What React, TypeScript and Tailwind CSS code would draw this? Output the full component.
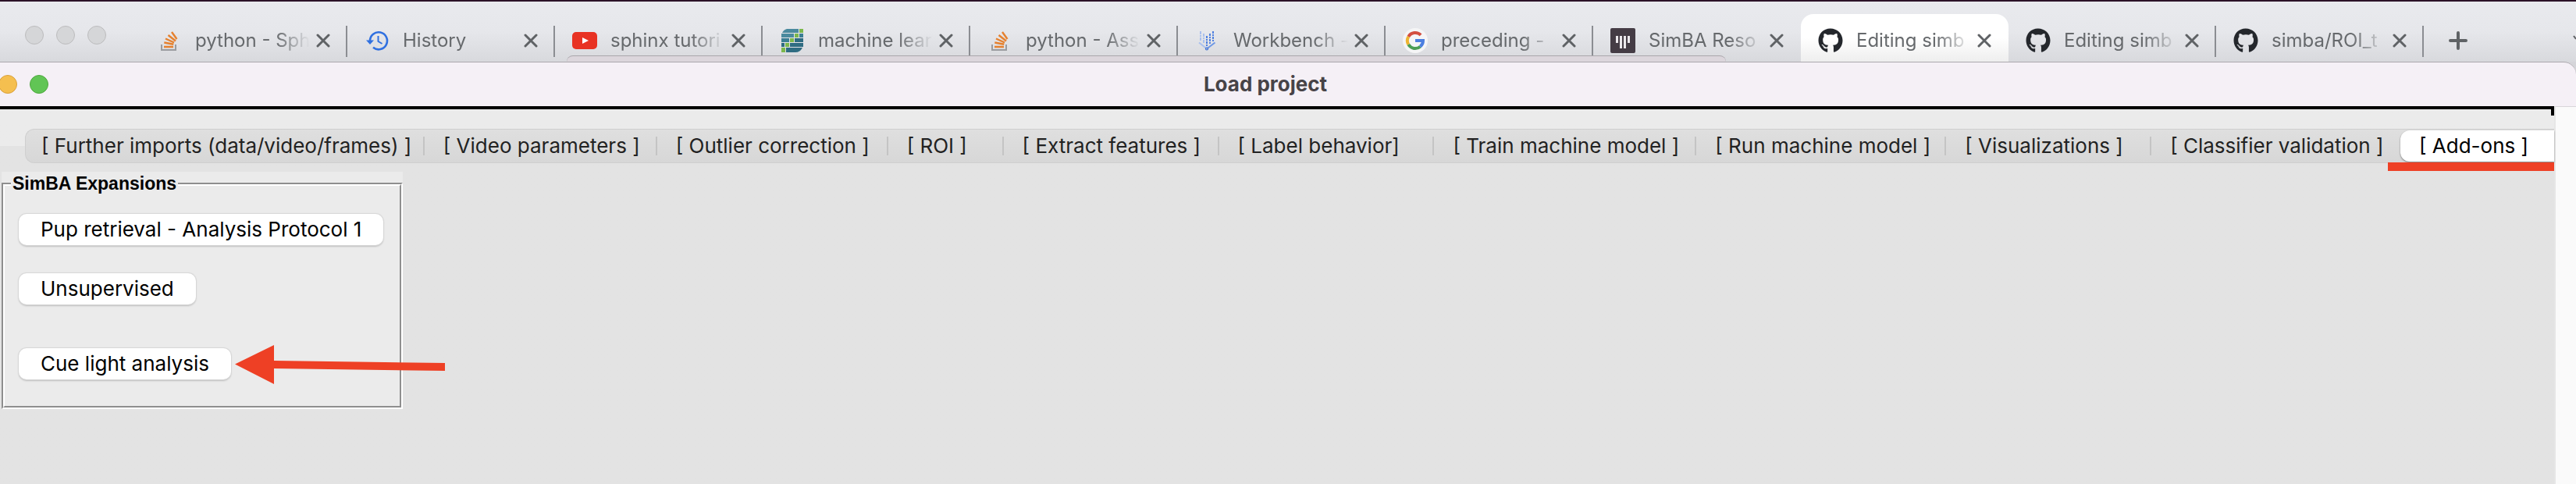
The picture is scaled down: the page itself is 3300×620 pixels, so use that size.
import React from "react";
import { FaGithub } from "react-icons/fa";

type IconName = "stack" | "history" | "youtube" | "springer" | "workbench" | "google" | "gitter" | "github";

function StackIcon() {
  return (
    <svg viewBox="0 0 32 32" className="size-8" fill="none" aria-hidden="true">
      <path d="M6 21v7h18v-7" stroke="#9a9c9f" strokeWidth="2" />
      <path d="M9 24h12M9.300 18.500l12 2.300M11 13.500l11 5M14.500 9l9.500 7.500M19 5l6.500 9" stroke="#e5812f" strokeWidth="2.400" />
    </svg>
  );
}

function HistoryIcon() {
  return (
    <svg viewBox="0 0 32 32" className="size-8" fill="none" aria-hidden="true">
      <path d="M7 16.500a11 11 0 1 1 4 8.300" stroke="#3070e0" strokeWidth="2.600" />
      <path d="M2 15.500h10l-5 5.500z" fill="#3070e0" />
      <path d="M17.500 10v7l5 3" stroke="#3070e0" strokeWidth="2" />
    </svg>
  );
}

function YoutubeIcon() {
  return (
    <svg viewBox="0 0 32 32" className="size-8" aria-hidden="true">
      <rect y="5" width="32" height="22" rx="5" fill="#e83223" />
      <path d="M13 12l8 4-8 4z" fill="#fff" />
    </svg>
  );
}

function SpringerIcon() {
  return (
    <svg viewBox="0 0 32 32" className="size-8" aria-hidden="true">
      <path d="M9 1h15v5H3Q5 2 9 1z" fill="#4b8a9e" />
      <path d="M2 7h16v5H2z" fill="#4b8a9e" />
      <path d="M25 7h5v5h-5zM2 13h10v5H2z" fill="#3b7e94" />
      <path d="M19 13h11v5H19zM2 19h4v5H2zM13 19h17v5H13z" fill="#2f6c82" />
      <path d="M8 25h21q-3 6-9 6H8z" fill="#2f6c82" />
      <path d="M25 1h5v5h-5zM19 7h5v5h-5zM13 13h5v5h-5zM7 19h5v5H7zM2 25h5v6H2z" fill="#7cb84c" />
    </svg>
  );
}

function WorkbenchIcon() {
  return (
    <svg viewBox="0 0 32 32" className="size-8" fill="none" aria-hidden="true">
      <path d="M7 4v13M11 7v13" stroke="#a9c0ee" strokeWidth="2" strokeDasharray="4 1 2 1" />
      <path d="M15 10v13M19 7v13M23 4v13" stroke="#4f80e0" strokeWidth="2" strokeDasharray="3 1 2 1" />
      <path d="M5 18.500l10 8" stroke="#a9c0ee" strokeWidth="2" />
      <path d="M25.500 18.500l-10.500 8" stroke="#6f98e6" strokeWidth="2" />
      <circle cx="15" cy="26.500" r="1.500" fill="#a9c0ee" stroke="#3f6fd0" strokeWidth="1.200" />
    </svg>
  );
}

function GoogleIcon() {
  return (
    <svg viewBox="0 0 32 32" className="size-8" fill="none" aria-hidden="true">
      <circle cx="16" cy="16" r="16" fill="#f5f5f6" />
      <path d="M7.300 10.900A10 10 0 0 1 23.100 8.900" stroke="#d34f40" strokeWidth="4" />
      <path d="M7.300 21.100a10 10 0 0 1 0-10.200" stroke="#eeb431" strokeWidth="4" />
      <path d="M22.400 23.700A10 10 0 0 1 7.300 21.100" stroke="#4c9e54" strokeWidth="4" />
      <path d="M16 16h10a10 10 0 0 1-3.600 7.700" stroke="#4c7fe0" strokeWidth="4" />
    </svg>
  );
}

function GitterIcon() {
  return (
    <svg viewBox="0 0 32 32" className="size-8" aria-hidden="true">
      <rect width="32" height="32" rx="2" fill="#453c45" />
      <path d="M7 10h3v9H7zM12 10h3v16h-3zM17 10h3v16h-3zM22 10h3v9h-3z" fill="#ece8ec" />
    </svg>
  );
}

function TabIcon({ name }: { name: IconName }) {
  switch (name) {
    case "stack":
      return <StackIcon />;
    case "history":
      return <HistoryIcon />;
    case "youtube":
      return <YoutubeIcon />;
    case "springer":
      return <SpringerIcon />;
    case "workbench":
      return <WorkbenchIcon />;
    case "google":
      return <GoogleIcon />;
    case "gitter":
      return <GitterIcon />;
    default:
      return <FaGithub className="size-8 text-[#24272c]" aria-hidden="true" />;
  }
}

const browserTabs: { icon: IconName; title: string; active?: boolean; divider?: boolean }[] = [
  { icon: "stack", title: "python - Sph", divider: true },
  { icon: "history", title: "History", divider: true },
  { icon: "youtube", title: "sphinx tutori", divider: true },
  { icon: "springer", title: "machine lear", divider: true },
  { icon: "stack", title: "python - Ass", divider: true },
  { icon: "workbench", title: "Workbench -", divider: true },
  { icon: "google", title: "preceding -", divider: true },
  { icon: "gitter", title: "SimBA Reso" },
  { icon: "github", title: "Editing simb", active: true },
  { icon: "github", title: "Editing simb", divider: true },
  { icon: "github", title: "simba/ROI_t", divider: true },
];

function BrowserTab({ icon, title, active, divider }: (typeof browserTabs)[number]) {
  return (
    <div
      className={
        active
          ? "flex h-full min-w-0 flex-1 items-end rounded-t-2xl bg-linear-to-b from-white via-white to-[#eeeeee] pb-[6px]"
          : "flex h-full min-w-0 flex-1 items-end pb-[6px]"
      }
    >
      <div className="flex h-10 min-w-0 flex-1 items-center pb-[2px] pl-[22px]">
        <span className="shrink-0">
          <TabIcon name={icon} />
        </span>
        <span className="ml-[17px] min-w-0 flex-1 overflow-hidden mask-r-from-70% text-[24px] leading-8 whitespace-nowrap text-[#66696c]">
          {title}
        </span>
        <button type="button" aria-label={`Close ${title}`} className="mr-5 ml-2 shrink-0">
          <svg viewBox="0 0 18 18" className="size-[18px]" aria-hidden="true">
            <path d="M2 2l14 14M16 2L2 16" stroke="#5f6265" strokeWidth="3" strokeLinecap="round" />
          </svg>
        </button>
      </div>
      <span className={divider ? "h-10 w-[2px] shrink-0 bg-[#8b8d92]" : "h-10 w-[2px] shrink-0"} />
    </div>
  );
}

function BrowserBar() {
  return (
    <header className="relative border-t-2 border-[#2b1228] bg-linear-to-b from-[#e9eaee] via-[#e6e7eb] to-[#d8d9dd]">
      <div className="flex h-[77px] pt-4">
        <div className="flex w-[179px] shrink-0 gap-4 pt-[15px] pl-8">
          <span className="size-6 shrink-0 rounded-full border border-[#bcbcbd] bg-[#d5d6d8]" />
          <span className="size-6 shrink-0 rounded-full border border-[#bcbcbd] bg-[#d5d6d8]" />
          <span className="size-6 shrink-0 rounded-full border border-[#bcbcbd] bg-[#d5d6d8]" />
        </div>
        <div className="flex min-w-0 flex-1">
          {browserTabs.map((tab, i) => (
            <BrowserTab key={i} {...tab} />
          ))}
        </div>
        <div className="flex w-[195px] shrink-0 items-center justify-between overflow-hidden pl-8">
          <button type="button" aria-label="New tab" className="pt-[6px]">
            <svg viewBox="0 0 24 24" className="size-6" aria-hidden="true">
              <path d="M12 2v20M2 12h20" stroke="#5f6265" strokeWidth="4" strokeLinecap="round" />
            </svg>
          </button>
          <svg viewBox="0 0 4 8" className="h-2 w-1" aria-hidden="true">
            <path d="M1 1l3 4" stroke="#5f6265" strokeWidth="2" />
          </svg>
        </div>
      </div>
      <div className="absolute right-[33%] bottom-0 left-[22%] h-2 rounded-t-2xl border-t border-[#a9a6aa] bg-[#dcd6dc]" />
    </header>
  );
}

function TitleBar() {
  return (
    <div className="bg-[#d5d5d9]">
      <div className="flex h-[57px] items-center overflow-hidden rounded-tr-2xl border-t border-[#aba8ad] bg-[#f5f0f6]">
        <div className="-ml-[2px] flex w-[60px] shrink-0 gap-4">
          <span className="size-6 shrink-0 rounded-full border border-[#d9a03c] bg-[#f5bf4f]" />
          <span className="size-6 shrink-0 rounded-full border border-[#4fa83f] bg-[#61c555]" />
        </div>
        <h1 className="mr-[116px] flex-1 text-center text-[26px] leading-8 font-bold text-[#474347]">Load project</h1>
      </div>
    </div>
  );
}

const projectTabs = [
  "[ Further imports (data/video/frames) ]",
  "[ Video parameters ]",
  "[ Outlier correction ]",
  "[ ROI ]",
  "[ Extract features ]",
  "[ Label behavior]",
  "[ Train machine model ]",
  "[ Run machine model ]",
  "[ Visualizations ]",
  "[ Classifier validation ]",
  "[ Add-ons ]",
];

function ProjectTabs() {
  const last = projectTabs.length - 1;
  return (
    <nav
      role="tablist"
      className="ml-8 grid h-11 grid-cols-[511fr_298fr_296fr_148fr_276fr_276fr_336fr_320fr_263fr_319fr_197fr] rounded-l-xl border-y border-l border-[#cfcfcf] bg-linear-to-b from-[#dfdfdf] to-[#d7d7d7]"
    >
      {projectTabs.map((label, i) => (
        <div key={label} className="group relative flex min-w-0 items-center">
          <button
            type="button"
            role="tab"
            aria-selected={i === last}
            className={
              i === last
                ? "h-10 w-full rounded-l-xl bg-white pl-6 text-left text-[26px] leading-8 whitespace-nowrap text-black shadow-[0_1px_2px_#777]"
                : "h-full min-w-0 flex-1 pl-6 text-left text-[26px] leading-8 whitespace-nowrap text-[#222222] group-first:pl-5"
            }
          >
            {label}
          </button>
          {i < last - 1 && <span className="h-6 w-[2px] shrink-0 bg-[#c4c4c4]" />}
          {i === last && <span className="absolute top-full right-0 -left-4 h-[11px] bg-[#ee4025]" />}
        </div>
      ))}
    </nav>
  );
}

function PushButton({ children }: { children: React.ReactNode }) {
  return (
    <button
      type="button"
      className="h-10 rounded-[10px] bg-white px-7 text-[26px] leading-8 whitespace-nowrap text-black shadow-[0_0_1px_1px_#d6d6d6,0_2px_2px_#bdbdbd]"
    >
      {children}
    </button>
  );
}

function ExpansionsPanel() {
  return (
    <div className="relative mt-[11px] ml-[2px] w-[514px] bg-[#ebebeb]">
      <fieldset className="border-2 border-t-[#8e8e8e] border-r-white border-b-white border-l-[#8e8e8e] pl-[10px]">
        <legend className="relative z-10 bg-[#ebebeb] px-[2px] font-['Liberation_Sans',Arial,sans-serif] text-[23px] leading-[30px] font-bold text-black">
          SimBA Expansions
        </legend>
        <div className="-mt-[14px] -ml-[10px] flex flex-col items-start border-2 border-t-white border-r-[#8e8e8e] border-b-[#8e8e8e] border-l-white pt-9 pb-[34px] pl-[18px]">
          <PushButton>Pup retrieval - Analysis Protocol 1</PushButton>
          <div className="mt-9">
            <PushButton>Unsupervised</PushButton>
          </div>
          <div className="mt-14">
            <PushButton>Cue light analysis</PushButton>
          </div>
        </div>
      </fieldset>
      <svg viewBox="0 0 270 50" className="absolute bottom-8 left-[299px] z-20 h-[50px] w-[270px]" aria-hidden="true">
        <path d="M0 24.500L50 0v20l219 3v10l-219-3v20z" fill="#ee4025" />
      </svg>
    </div>
  );
}

export default function App() {
  return (
    <div className="flex min-h-screen flex-col overflow-hidden bg-[#e3e3e3] font-[Inter,'Liberation_Sans',sans-serif]">
      <BrowserBar />
      <TitleBar />
      <main className="flex flex-1">
        <div className="relative min-w-0 flex-1 border-t-4 border-black bg-linear-to-b from-[#ebebeb] from-[47px] to-[#e3e3e3] to-[47px] pt-[25px]">
          <span className="absolute top-0 right-0 h-2 w-1 bg-black" />
          <ProjectTabs />
          <ExpansionsPanel />
        </div>
        <div className="w-7 shrink-0 border-t border-l-2 border-t-[#d9d6da] border-l-[#e6e6e6] bg-[#fafafa]" />
      </main>
    </div>
  );
}
